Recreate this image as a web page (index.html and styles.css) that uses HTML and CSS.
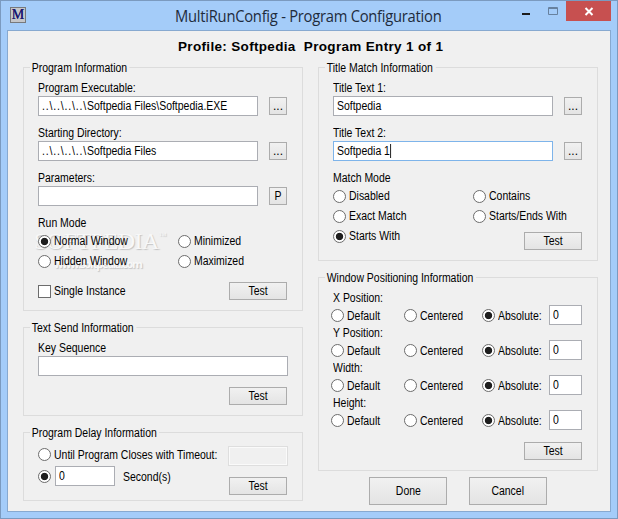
FILE: index.html
```
<!DOCTYPE html>
<html lang="en">
<head>
<meta charset="utf-8">
<title>MultiRunConfig - Program Configuration</title>
<link rel="stylesheet" href="styles.css">
</head>
<body>
<div class="window">
  <header class="titlebar">
    <span class="app-icon">M</span>
    <h1 class="caption">MultiRunConfig - Program Configuration</h1>
    <div class="controls">
      <svg class="minmax" width="58" height="19" viewBox="0 0 58 19"><path d="M14 12h8v2h-8z" fill="#1c1c1c"/><path d="M40.500 6.500h9v7h-9z" fill="none" stroke="#67819f"/><path d="M40 7.500h10" stroke="#67819f"/></svg>
      <span class="close"><svg width="45" height="20" viewBox="0 0 45 20"><path d="M19.500 7l7 7M26.500 7l-7 7" stroke="#fff" stroke-width="2"/></svg></span>
    </div>
  </header>
  <main class="client">
    <h2 class="profile">Profile: Softpedia&nbsp; Program Entry 1 of 1</h2>
    <div class="columns">
      <div class="column">
        <section class="group program">
          <h3 class="legend">Program Information</h3>
          <div class="label">Program Executable:</div>
          <div class="row"><span class="field"><span class="text"><span class="dots">..\..\..\..\</span>Softpedia Files\Softpedia.EXE</span></span><span class="button small">...</span></div>
          <div class="label spaced">Starting Directory:</div>
          <div class="row"><span class="field"><span class="text"><span class="dots">..\..\..\..\</span>Softpedia Files</span></span><span class="button small">...</span></div>
          <div class="label spaced">Parameters:</div>
          <div class="row"><span class="field"></span><span class="button small"><span class="text">P</span></span></div>
          <div class="label spaced">Run Mode</div>
          <div class="options">
            <span class="option"><i class="radio on"></i><span class="text">Normal Window</span></span><span class="option"><i class="radio"></i><span class="text">Minimized</span></span>
            <span class="option"><i class="radio"></i><span class="text">Hidden Window</span></span><span class="option"><i class="radio"></i><span class="text">Maximized</span></span>
          </div>
          <div class="row foot"><span class="option"><i class="check"></i><span class="text">Single Instance</span></span><span class="button"><span class="text">Test</span></span></div>
          <div class="watermark"><b>SOFTPEDIA<sup>™</sup></b><em>www.softpedia.com</em></div>
        </section>
        <section class="group send">
          <h3 class="legend">Text Send Information</h3>
          <div class="label">Key Sequence</div>
          <div class="row"><span class="field full"></span></div>
          <div class="row foot"><span class="button"><span class="text">Test</span></span></div>
        </section>
        <section class="group delay">
          <h3 class="legend">Program Delay Information</h3>
          <div class="row timeout"><span class="option"><i class="radio"></i><span class="text">Until Program Closes with Timeout:</span></span><span class="field disabled"></span></div>
          <div class="row timed">
            <i class="radio on"></i><span class="field seconds"><span class="text">0</span></span><span class="text unit">Second(s)</span><span class="button"><span class="text">Test</span></span>
          </div>
        </section>
      </div>
      <div class="column">
        <section class="group match">
          <h3 class="legend">Title Match Information</h3>
          <div class="label">Title Text 1:</div>
          <div class="row"><span class="field"><span class="text">Softpedia</span></span><span class="button small">...</span></div>
          <div class="label spaced">Title Text 2:</div>
          <div class="row"><span class="field focused"><span class="text">Softpedia 1<i class="caret"></i></span></span><span class="button small">...</span></div>
          <div class="label spaced">Match Mode</div>
          <div class="options">
            <span class="option"><i class="radio"></i><span class="text">Disabled</span></span><span class="option"><i class="radio"></i><span class="text">Contains</span></span>
            <span class="option"><i class="radio"></i><span class="text">Exact Match</span></span><span class="option"><i class="radio"></i><span class="text">Starts/Ends With</span></span>
            <span class="option"><i class="radio on"></i><span class="text">Starts With</span></span><span class="button"><span class="text">Test</span></span>
          </div>
        </section>
        <section class="group position">
          <h3 class="legend">Window Positioning Information</h3>
          <div class="label">X Position:</div>
          <div class="axis"><span class="option"><i class="radio"></i><span class="text">Default</span></span><span class="option"><i class="radio"></i><span class="text">Centered</span></span><span class="option"><i class="radio on"></i><span class="text">Absolute:</span></span><span class="field"><span class="text">0</span></span></div>
          <div class="label">Y Position:</div>
          <div class="axis"><span class="option"><i class="radio"></i><span class="text">Default</span></span><span class="option"><i class="radio"></i><span class="text">Centered</span></span><span class="option"><i class="radio on"></i><span class="text">Absolute:</span></span><span class="field"><span class="text">0</span></span></div>
          <div class="label">Width:</div>
          <div class="axis"><span class="option"><i class="radio"></i><span class="text">Default</span></span><span class="option"><i class="radio"></i><span class="text">Centered</span></span><span class="option"><i class="radio on"></i><span class="text">Absolute:</span></span><span class="field"><span class="text">0</span></span></div>
          <div class="label">Height:</div>
          <div class="axis"><span class="option"><i class="radio"></i><span class="text">Default</span></span><span class="option"><i class="radio"></i><span class="text">Centered</span></span><span class="option"><i class="radio on"></i><span class="text">Absolute:</span></span><span class="field"><span class="text">0</span></span></div>
          <div class="row foot"><span class="button"><span class="text">Test</span></span></div>
        </section>
        <div class="actions"><span class="button"><span class="text">Done</span></span><span class="button"><span class="text">Cancel</span></span></div>
      </div>
    </div>
  </main>
</div>
</body>
</html>
```
FILE: styles.css
```
* { box-sizing: border-box; }
body { margin: 0; }
h1, h2, h3 { margin: 0; font-weight: normal; }
i { font-style: normal; }
.window {
  width: 618px; height: 519px; padding: 0 6px;
  display: flex; flex-direction: column;
  background: #a4ccf9; border: 1px solid #7b9abf;
  font: 12px/16px "Liberation Sans", sans-serif;
  color: #000; white-space: nowrap;
}
.titlebar { height: 29px; display: flex; flex: none; }
.app-icon {
  width: 16px; height: 16px; margin: 6px 0 0 3px;
  background: #c5c6c9; border: 1px solid #77797c;
  font: 14px/14px "Liberation Serif", serif; text-align: center; color: #18186e;
  text-shadow: 0 0 0.5px #18186e;
}
.caption {
  flex: 1; padding: 5px 0 0; margin-left: 149px; transform: scaleX(0.952); transform-origin: left;
  font: 15.5px/20px "Open Sans", sans-serif; letter-spacing: -0.27px; color: #1e2b3c;
}
.controls { display: flex; }
.close { width: 45px; height: 20px; background: #c75050; }
.close svg { display: block; }
.client {
  height: 482px; flex: none; background: #f0f0f0; border: 1px solid #87a9d0;
}
.profile {
  height: 36px; padding: 8px 0 0 170px;
  font: bold 13.5px/16px "Liberation Sans", sans-serif; letter-spacing: 0.33px;
}
.columns { display: grid; grid-template-columns: 280px 280px; gap: 15px; padding-left: 15px; }
.column { display: flex; flex-direction: column; }
.group { position: relative; isolation: isolate; border: 1px solid #dcdcdc; padding: 12px 15px 0 14px; }
.program { height: 244px; margin-bottom: 16px; }
.send { height: 89px; margin-bottom: 16px; }
.delay { height: 69px; padding-top: 13px; }
.match { height: 194px; margin-bottom: 16px; }
.position { height: 194px; }
.legend {
  position: absolute; left: 6px; top: -8px; padding: 0 3px 0 2px;
  font: inherit; background: #f0f0f0;
}
/* condensed dialog face */
.text, .label, .legend { transform: scaleX(0.872); transform-origin: left; }
.text { display: inline-block; }
.dots { letter-spacing: 0.97px; }
.label { height: 16px; }
.spaced { margin-top: 9px; }
.row { display: flex; height: 20px; justify-content: space-between; align-items: center; }
.field {
  display: flex; width: 220px; height: 20px; padding: 1px 3px;
  background: #fff; border: 1px solid #abadb3;
}
.full { width: 250px; flex: none; }
.focused { border-color: #7eb4ea; }
.caret { display: inline-block; width: 1.15px; height: 14px; background: #000; vertical-align: -3px; }
.button {
  width: 58px; height: 18px; line-height: 16px; text-align: center;
  border: 1px solid #acacac; background: linear-gradient(#f1f1f1, #e4e4e4);
}
.button .text { transform-origin: center; }
.small { width: 18px; }
.options { display: grid; grid-template-columns: 140px minmax(0, 1fr); grid-auto-rows: 20px; }
.options .button { justify-self: end; margin-top: 6px; }
.option { display: flex; align-items: center; gap: 3px; }
.radio {
  flex: none; width: 13px; height: 13px; border-radius: 50%;
  background: #fff; border: 1px solid #6c6c6c;
}
.radio.on { background: radial-gradient(circle, #1e1e1e 3.3px, #fff 4.1px); }
.check { width: 13px; height: 13px; background: #fff; border: 1px solid #6c6c6c; }
.foot { height: 18px; margin-top: 11px; }
.foot .button { margin-left: auto; }
/* embossed mark under the run mode options */
.watermark {
  position: absolute; z-index: -1; left: 10px; top: 161px; display: flex; flex-direction: column;
  color: #f8f8f8; text-shadow: 1px 1px 1px rgba(80, 80, 80, 0.28);
}
.watermark b { font: 24px/24px "Liberation Serif", serif; letter-spacing: -0.5px; }
.watermark sup { font-size: 8px; line-height: 1; vertical-align: 11px; }
.watermark em { font: bold 11px/14px "Open Sans", sans-serif; letter-spacing: -1.3px; padding-left: 20px; margin-top: 4px; }
.send .row:not(.foot), .timeout { width: 250px; }
.timeout .option { width: 190px; margin-top: -3px; }
.disabled { width: 60px; flex: none; background: #f0f0f0; border-color: #dedede; box-shadow: inset 0 0 0 1px #fafafa; }
.timed { justify-content: flex-start; }
.seconds { width: 60px; margin-left: 4px; }
.unit { margin: 2px 0 0 8px; }
.timed .button { margin: 11px 0 0 auto; align-self: flex-start; }
.axis {
  height: 19px; display: grid; grid-template-columns: 73px 78px 67px 33px;
  margin-left: -2px; align-items: center;
}
.axis .field { width: 33px; margin-top: -1px; }
.position .foot { margin-top: 12px; }
.actions { display: flex; gap: 22px; padding: 6px 0 0 51px; }
.actions .button { width: 78px; height: 28px; line-height: 26px; }
```
